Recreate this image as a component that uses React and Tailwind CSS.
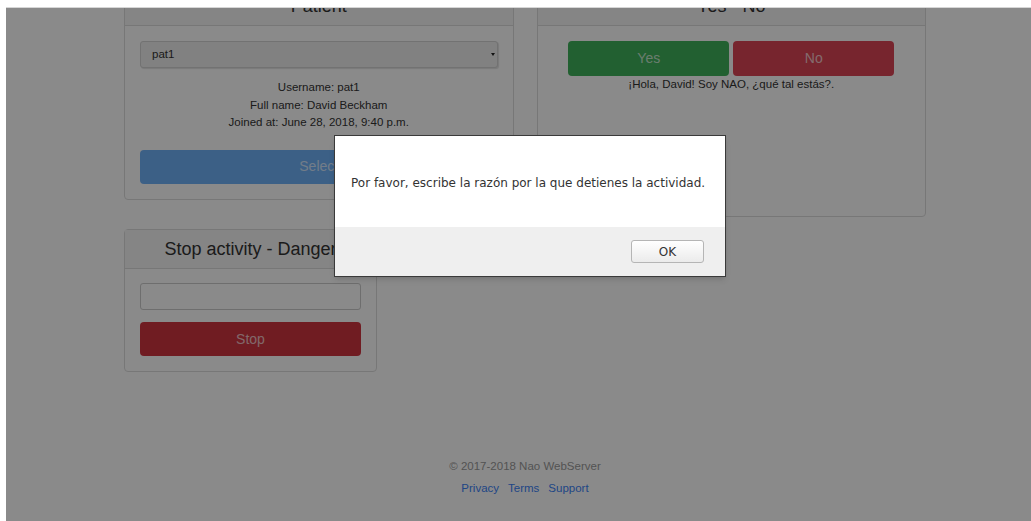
import React from 'react';

function Panel({ title, className = '', children }) {
  return (
    <div className={`rounded-[4px] border border-[#dddddd] bg-white ${className}`}>
      <div className="flex h-[39px] items-center justify-center border-b border-[#dddddd] bg-[#f5f5f5] text-[18px] text-[#333333]">
        {title}
      </div>
      {children}
    </div>
  );
}

function AlertDialog() {
  return (
    <div className="absolute left-[328px] top-[127px] flex h-[142px] w-[392px] flex-col border border-[#3a3a3a] bg-white font-['DejaVu_Sans',sans-serif] shadow-md">
      <div className="flex h-[91px] items-center pl-[16px] pt-[3px] text-[12px] text-[#333333]">
        Por favor, escribe la razón por la que detienes la actividad.
      </div>
      <div className="flex flex-1 items-center justify-end bg-[#efefef] pr-[21px]">
        <button className="h-[23px] w-[73px] rounded-[3px] border border-[#b5b5b5] bg-gradient-to-b from-white to-[#ebebeb] text-[12px] text-[#333333]">
          OK
        </button>
      </div>
    </div>
  );
}

export default function App() {
  return (
    <div className="relative h-[521px] w-[1031px] overflow-hidden bg-white font-['Liberation_Sans',Arial,sans-serif]">
      <div className="pl-[6px] pt-[7px]">
        <div className="relative h-[514px] overflow-hidden border-t border-[#d6d6d6] bg-white">
          <div className="-mt-[22px] w-[1038px]">
            <div className="mx-auto w-[802px]">
              <div className="grid grid-cols-2 items-start gap-[23px]">
                <Panel title="Patient">
                  <div className="px-[15px] pb-[15px] pt-[15px]">
                    <div className="flex h-[27px] items-center justify-between rounded-[3px] border border-[#d2d2d2] bg-[#eeeeee] pl-[11px] pr-[2px] text-[11.5px] text-[#333333] shadow-[1px_1px_1px_rgba(0,0,0,0.12)]">
                      <span>pat1</span>
                      <span className="h-0 w-0 border-l-[2px] border-r-[2px] border-t-[3px] border-l-transparent border-r-transparent border-t-[#222222]" />
                    </div>
                    <div className="mt-[11px] text-center text-[11.5px] leading-[17.5px] text-[#333333]">
                      <p>Username: pat1</p>
                      <p>Full name: David Beckham</p>
                      <p>Joined at: June 28, 2018, 9:40 p.m.</p>
                    </div>
                    <button className="mt-[18px] h-[34px] w-full rounded-[4px] bg-[#6fb2f8] text-[14px] text-white/70">
                      Select
                    </button>
                  </div>
                </Panel>

                <Panel title="Yes - No">
                  <div className="h-[190px] pt-[15px]">
                    <div className="flex justify-center gap-[4px]">
                      <button className="h-[35px] w-[161px] rounded-[4px] bg-[#40b25b] text-[14px] text-white/70">
                        Yes
                      </button>
                      <button className="h-[35px] w-[161px] rounded-[4px] bg-[#dc4555] text-[14px] text-white/70">
                        No
                      </button>
                    </div>
                    <p className="text-center text-[11.5px] leading-[16px] text-[#333333]">
                      ¡Hola, David! Soy NAO, ¿qué tal estás?.
                    </p>
                  </div>
                </Panel>
              </div>

              <Panel title="Stop activity - Danger" className="mt-[12px] w-[253px]">
                <div className="px-[15px] pb-[15px] pt-[14px]">
                  <input className="block h-[27px] w-full rounded-[3px] border border-[#cccccc] bg-white" />
                  <button className="mt-[12px] h-[34px] w-full rounded-[4px] bg-[#d03440] text-[14px] text-white/70">
                    Stop
                  </button>
                </div>
              </Panel>
            </div>

            <footer className="mt-[85px] text-center text-[11.5px] leading-[18px]">
              <p className="text-[#9a9a9a]">© 2017-2018 Nao WebServer</p>
              <div className="mt-[4px] flex justify-center gap-[9px] text-[#3b82f6]">
                <a>Privacy</a>
                <a>Terms</a>
                <a>Support</a>
              </div>
            </footer>
          </div>

          {/* dimmed backdrop behind the alert */}
          <div className="absolute inset-0 bg-black/[0.46]" />
          <AlertDialog />
        </div>
      </div>
    </div>
  );
}
